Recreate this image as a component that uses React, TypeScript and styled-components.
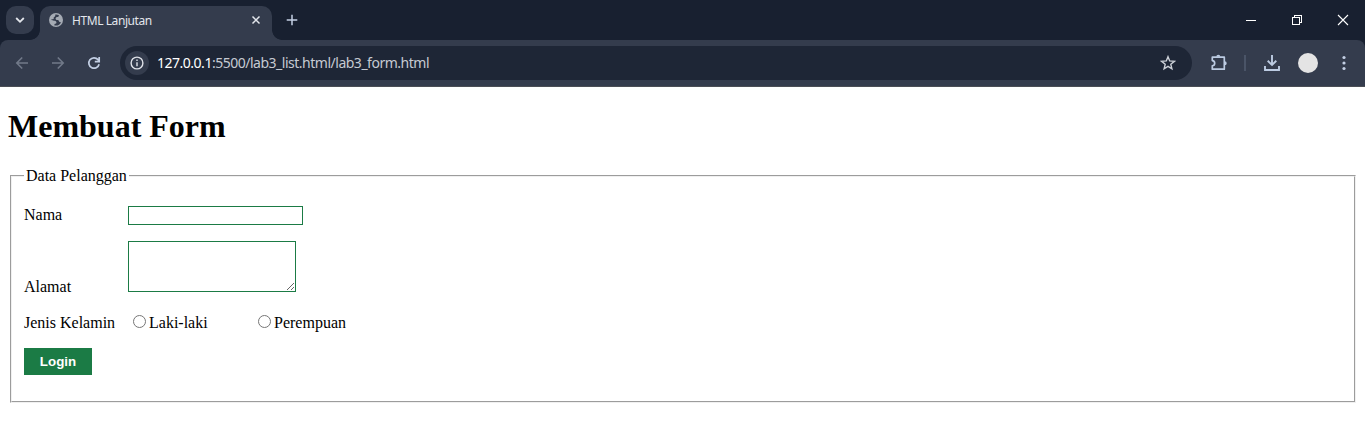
import React from 'react';
import styled, { createGlobalStyle } from 'styled-components';

const GlobalStyle = createGlobalStyle`
  html, body { margin: 0; padding: 0; background: #fff; }
  body { height: 443px; overflow: hidden; color: #000; font: 16px/18px "Liberation Serif", serif; }
  svg { display: block; flex: none; }
`;

const chromeFont = '"Noto Sans", "Open Sans", sans-serif';

const Browser = styled.header`
  height: 87px;
  background: #182030;
  font-family: ${chromeFont};
`;

const TabStrip = styled.div`
  display: flex;
  height: 40px;
  box-sizing: border-box;
  padding: 6px 0 0 6px;
`;

const TabSearch = styled.div`
  display: flex;
  align-items: center;
  justify-content: center;
  width: 28px;
  height: 28px;
  border-radius: 10px;
  background: #343c4d;
`;

const Tab = styled.div`
  position: relative;
  display: flex;
  align-items: center;
  box-sizing: border-box;
  width: 232px;
  height: 34px;
  margin-left: 6px;
  padding: 0 11px 6px 9px;
  border-radius: 10px 10px 0 0;
  background: #343c4d;

  &::before,
  &::after {
    content: '';
    position: absolute;
    bottom: 0;
    width: 10px;
    height: 10px;
  }
  &::before {
    left: -10px;
    background: radial-gradient(circle at 0 0, transparent 9.5px, #343c4d 10.2px);
  }
  &::after {
    right: -10px;
    background: radial-gradient(circle at 100% 0, transparent 9.5px, #343c4d 10.2px);
  }
`;

const TabTitle = styled.span`
  flex: 1;
  margin: 1px 0 0 9px;
  font-size: 12px;
  line-height: 16px;
  letter-spacing: -0.42px;
  color: #e3e6ec;
  white-space: nowrap;
`;

const NewTab = styled.div`
  display: flex;
  align-items: center;
  height: 28px;
  margin-left: 14px;
`;

const WindowControls = styled.div`
  display: flex;
  gap: 34px;
  align-items: center;
  height: 28px;
  margin-left: auto;
  padding-right: 16px;
`;

const Toolbar = styled.div`
  display: flex;
  align-items: center;
  height: 47px;
  box-sizing: border-box;
  padding: 0 13px 0 14px;
  border-bottom: 1px solid #4b4e55;
  border-radius: 8px 8px 0 0;
  background: #343c4d;
`;

const NavButtons = styled.nav`
  display: flex;
  gap: 20px;
`;

const AddressBar = styled.div`
  display: flex;
  align-items: center;
  flex: 1;
  box-sizing: border-box;
  height: 34px;
  margin-left: 18px;
  padding: 0 16px 0 5px;
  border-radius: 17px;
  background: #1e2636;
`;

const SiteInfo = styled.div`
  display: flex;
  align-items: center;
  justify-content: center;
  width: 24px;
  height: 24px;
  border-radius: 50%;
  background: #343c4d;
`;

const Url = styled.span`
  flex: 1;
  margin-left: 8px;
  font-size: 14px;
  line-height: 20px;
  letter-spacing: -0.49px;
  color: #c6cad2;
  white-space: nowrap;
`;

const Host = styled.span`
  color: #fff;
`;

const Actions = styled.div`
  display: flex;
  align-items: center;
  margin-left: 18px;
`;

const Divider = styled.div`
  width: 2px;
  height: 16px;
  margin: 0 17px 0 16px;
  background: #4a5467;
`;

const Avatar = styled.div`
  width: 20px;
  height: 20px;
  margin: 0 18px 0 17px;
  border-radius: 50%;
  background: #e4e4e4;
`;

const Page = styled.main`
  padding: 21px 8px 0;
`;

const Heading = styled.h1`
  margin: 0 0 22px;
  font-size: 32px;
  line-height: 37px;
  font-weight: bold;
`;

const FormGroup = styled.fieldset`
  box-sizing: border-box;
  height: 236px;
  margin: 0 1px 0 2px;
  padding: 21px 12px 0;
  border: 2px groove #f0f0f0;
`;

const Legend = styled.legend`
  padding: 0 2px;
`;

const Row = styled.div<{ $gap?: number }>`
  display: flex;
  align-items: flex-end;
  margin-bottom: ${(p) => p.$gap ?? 16}px;
`;

const FieldLabel = styled.label<{ $offset?: number }>`
  width: 104px;
  margin-bottom: ${(p) => p.$offset ?? 0}px;
  white-space: nowrap;
`;

const TextInput = styled.input`
  box-sizing: border-box;
  width: 175px;
  height: 19px;
  margin: 0;
  padding: 1px 2px;
  border: 1px solid #1b7b45;
`;

const TextArea = styled.textarea`
  box-sizing: border-box;
  width: 168px;
  height: 51px;
  margin: 0;
  padding: 2px;
  border: 1px solid #1b7b45;
`;

const Option = styled.label`
  display: flex;
  width: 125px;
`;

const Radio = styled.input`
  width: 13px;
  height: 13px;
  margin: 1px 3px 0 5px;
`;

const Submit = styled.button`
  width: 68px;
  height: 27px;
  padding: 0;
  border: 0;
  background: #1b7b45;
  color: #fff;
  font: bold 13.333px/15px "Liberation Sans", sans-serif;
`;

export default function App() {
  return (
    <>
      <GlobalStyle />
      <Browser>
        <TabStrip>
          <TabSearch>
            <svg width="10" height="8" viewBox="0 0 10 8" fill="none" stroke="#e3e6ec" strokeWidth="1.8">
              <path d="M1.2 2 5 5.8 8.8 2" />
            </svg>
          </TabSearch>
          <Tab>
            <svg width="14" height="14" viewBox="2 2 20 20">
              <circle cx="12" cy="12" r="10" fill="#a5abb4" />
              <path
                d="M11 4.1v1.6c0 1.2-1 2.2-2.2 2.2v1.800c0 .7-.5 1.200-1.200 1.200H5.200c.7 1.700 2 2 4 2 2.200 0 3.400.9 3.400 2.700 0 1.500-1 2-2.800 2v2.100c3.800 1 8.100-.8 9.600-4.900-1.200.5-2.500.3-3-.8-.6-1.300-1.100-1.900-2.500-1.900-1.800 0-2.500-1-2.500-2.200 0-1.500 1.200-2.300 3-2.300 1.100 0 1.600-.6 1.600-1.500V5c-1.300-.8-3.100-1.100-5-.9z"
                fill="#343c4d"
              />
            </svg>
            <TabTitle>HTML Lanjutan</TabTitle>
            <svg width="10" height="10" viewBox="0 0 10 10" stroke="#e3e6ec" strokeWidth="1.5">
              <path d="m1.500 1.500 7 7m0-7-7 7" />
            </svg>
          </Tab>
          <NewTab>
            <svg width="12" height="12" viewBox="0 0 12 12" stroke="#c3cfe4" strokeWidth="1.5">
              <path d="M6 .7v10.600M.7 6h10.600" />
            </svg>
          </NewTab>
          <WindowControls>
            <svg width="12" height="12" viewBox="0 0 12 12" stroke="#fff" shapeRendering="crispEdges">
              <path d="M1 6.500h10" />
            </svg>
            <svg width="12" height="12" viewBox="0 0 12 12" fill="none" stroke="#fff" shapeRendering="crispEdges">
              <path d="M1.500 3.500h7v7h-7zM3.500 3.500v-2h7v7h-2" />
            </svg>
            <svg width="12" height="12" viewBox="0 0 12 12" stroke="#fff" strokeWidth="1.1">
              <path d="m1 1 10 10m0-10L1 11" />
            </svg>
          </WindowControls>
        </TabStrip>
        <Toolbar>
          <NavButtons>
            <svg width="16" height="16" viewBox="0 0 16 16" fill="none" stroke="#717989" strokeWidth="1.6">
              <path d="M14 8H3M8.200 2.500 2.800 8l5.400 5.500" />
            </svg>
            <svg width="16" height="16" viewBox="0 0 16 16" fill="none" stroke="#717989" strokeWidth="1.6">
              <path d="M2 8h11M7.800 2.500 13.200 8l-5.400 5.500" />
            </svg>
            <svg width="16" height="16" viewBox="0 0 16 16" fill="none" stroke="#c3cfe4" strokeWidth="1.7">
              <path d="M13.100 9.200A5.200 5.200 0 1 1 12 4.600l1.200 1.600M13.200 2v4.600H8.800" />
            </svg>
          </NavButtons>
          <AddressBar>
            <SiteInfo>
              <svg width="14" height="14" viewBox="0 0 14 14" fill="none" stroke="#dfe2e8" strokeWidth="1.4">
                <circle cx="7" cy="7" r="5.900" />
                <path d="M7 6.200v4M7 3.600v1.500" />
              </svg>
            </SiteInfo>
            <Url>
              <Host>127.0.0.1</Host>:5500/lab3_list.html/lab3_form.html
            </Url>
            <svg width="16" height="16" viewBox="0 0 16 16" fill="none" stroke="#cdd1d8" strokeWidth="1.4">
              <path d="m8 1.700 1.700 4.200 4.700.4-3.600 3 1.100 4.500L8 11.400l-3.900 2.400 1.100-4.500-3.600-3 4.700-.4z" />
            </svg>
          </AddressBar>
          <Actions>
            <svg width="18" height="18" viewBox="0 0 18 18" fill="none" stroke="#bccbe2" strokeWidth="1.7">
              <path d="M2.300 3.200h12v12h-12v-3.400c1.600-.2 2.400-1.200 2.400-2.600S3.900 6.800 2.300 6.600z" strokeLinejoin="round" />
              <path d="M6.300 2.800a2 2 0 0 1 4 0zM14.700 7.200a2 2 0 0 1 0 4z" fill="#bccbe2" stroke="none" />
            </svg>
            <Divider />
            <svg width="18" height="18" viewBox="0 0 18 18" fill="none" stroke="#bccbe2" strokeWidth="1.9">
              <path d="M9 1v9.500M4.700 6.800 9 11l4.300-4.200M2 12v4h14v-4" />
            </svg>
            <Avatar />
            <svg width="16" height="16" viewBox="0 0 16 16" fill="#c3cfe4">
              <circle cx="8" cy="2.500" r="1.600" />
              <circle cx="8" cy="8" r="1.600" />
              <circle cx="8" cy="13.500" r="1.600" />
            </svg>
          </Actions>
        </Toolbar>
      </Browser>
      <Page>
        <Heading>Membuat Form</Heading>
        <FormGroup>
          <Legend>Data Pelanggan</Legend>
          <Row>
            <FieldLabel $offset={1}>Nama</FieldLabel>
            <TextInput type="text" />
          </Row>
          <Row $gap={22}>
            <FieldLabel $offset={-4}>Alamat</FieldLabel>
            <TextArea />
          </Row>
          <Row>
            <FieldLabel>Jenis Kelamin</FieldLabel>
            <Option>
              <Radio type="radio" name="gender" />
              Laki-laki
            </Option>
            <Option>
              <Radio type="radio" name="gender" />
              Perempuan
            </Option>
          </Row>
          <Submit type="button">Login</Submit>
        </FormGroup>
      </Page>
    </>
  );
}
